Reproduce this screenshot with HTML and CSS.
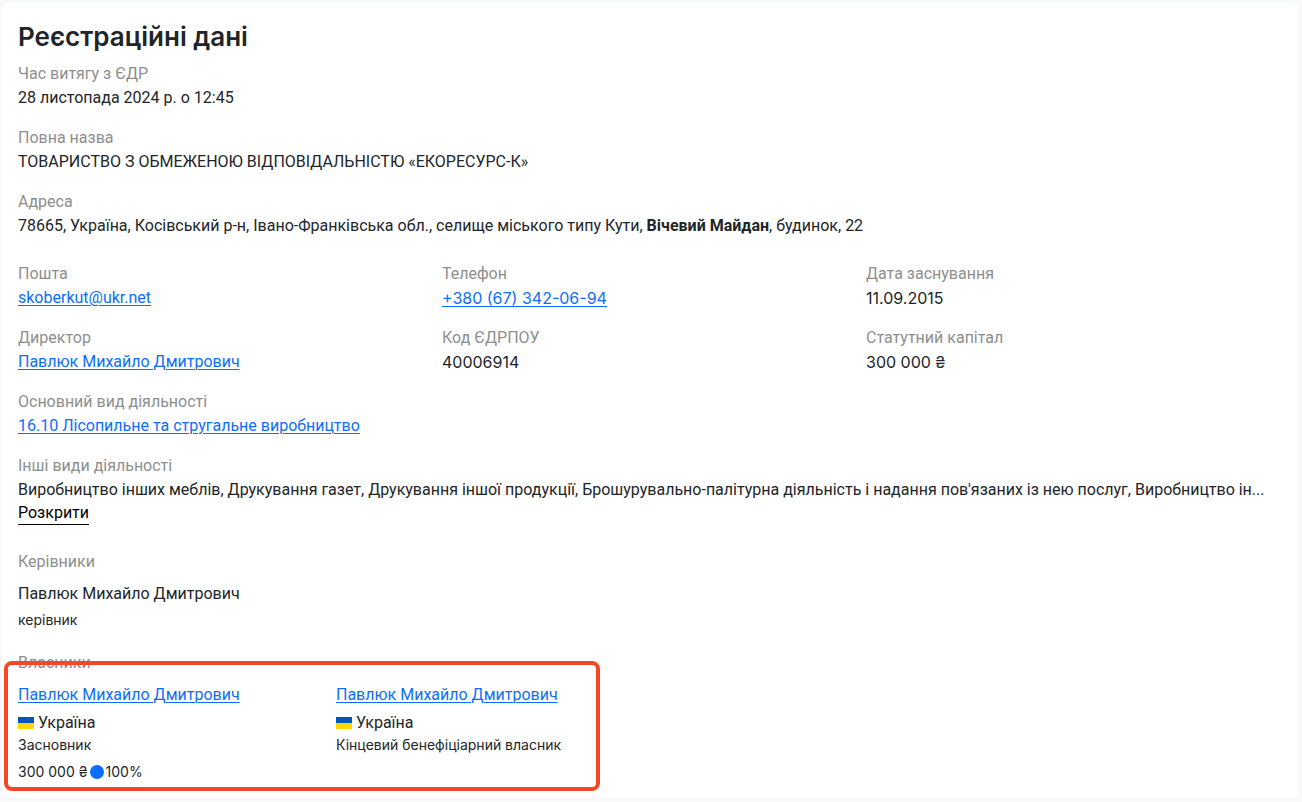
FILE: index.html
```html
<!DOCTYPE html>
<html lang="uk">
<head>
<meta charset="utf-8">
<meta name="viewport" content="width=device-width, initial-scale=1">
<title>Реєстраційні дані</title>
<link rel="stylesheet" href="styles.css">
</head>
<body>
<main class="card">
  <h1 class="title">Реєстраційні дані</h1>
  <dl class="fields">
    <div class="field"><dt>Час витягу з ЄДР</dt><dd>28 листопада 2024 р. о 12:45</dd></div>
    <div class="field"><dt>Повна назва</dt><dd>ТОВАРИСТВО З ОБМЕЖЕНОЮ ВІДПОВІДАЛЬНІСТЮ «ЕКОРЕСУРС-К»</dd></div>
    <div class="field"><dt>Адреса</dt><dd>78665, Україна, Косівський р-н, Івано-Франківська обл., селище міського типу Кути, <b>Вічевий Майдан</b>, будинок, 22</dd></div>
  </dl>
  <dl class="fields grid">
    <div class="field"><dt>Пошта</dt><dd><a href="mailto:skoberkut@ukr.net">skoberkut@ukr.net</a></dd></div>
    <div class="field"><dt>Телефон</dt><dd class="numeric"><a href="tel:+380673420694">+380 (67) 342-06-94</a></dd></div>
    <div class="field"><dt>Дата заснування</dt><dd class="numeric">11.09.2015</dd></div>
    <div class="field"><dt>Директор</dt><dd><a href="#director">Павлюк Михайло Дмитрович</a></dd></div>
    <div class="field"><dt>Код ЄДРПОУ</dt><dd class="numeric">40006914</dd></div>
    <div class="field"><dt>Статутний капітал</dt><dd class="numeric">300 000 ₴</dd></div>
  </dl>
  <dl class="fields activities">
    <div class="field"><dt>Основний вид діяльності</dt><dd><a href="#kved">16.10 Лісопильне та стругальне виробництво</a></dd></div>
    <div class="field"><dt>Інші види діяльності</dt><dd class="clip">Виробництво інших меблів, Друкування газет, Друкування іншої продукції, Брошурувально-палітурна діяльність і надання пов'язаних із нею послуг, Виробництво ін...</dd></div>
  </dl>
  <button class="expand" type="button">Розкрити</button>
  <section class="people">
    <h2 class="label">Керівники</h2>
    <p class="name">Павлюк Михайло Дмитрович</p>
    <p class="small">керівник</p>
  </section>
  <section class="people owners">
    <h2 class="label">Власники</h2>
    <div class="owner-list">
      <article class="owner">
        <a class="name" href="#founder">Павлюк Михайло Дмитрович</a>
        <p class="country"><span class="flag"></span>Україна</p>
        <p class="small role">Засновник</p>
        <p class="small share">300 000 ₴<span class="dot"></span>100%</p>
      </article>
      <article class="owner">
        <a class="name" href="#beneficiary">Павлюк Михайло Дмитрович</a>
        <p class="country"><span class="flag"></span>Україна</p>
        <p class="small role">Кінцевий бенефіціарний власник</p>
      </article>
    </div>
    <div class="highlight"></div>
  </section>
</main>
</body>
</html>
```
FILE: styles.css
```css
* { box-sizing: border-box; }
body {
  margin: 0;
  padding: 3px 4px 3px 2px;
  background: #f8f9fa;
  color: #212529;
  font: 16px/24px Roboto, "Liberation Sans", sans-serif;
}
h1, h2, p, dl, dd { margin: 0; }
a { color: #0d6efd; text-underline-offset: 2px; text-decoration-thickness: 1px; }
.card {
  padding: 18px 8px 16px 16px;
  border-radius: 6px;
  background: #fff;
}
.title {
  margin-bottom: 9px;
  font-family: Inter, "Liberation Sans", sans-serif;
  font-size: 26px;
  font-weight: 600;
  line-height: 32px;
}
.fields { display: grid; gap: 16px; }
.grid {
  grid-template-columns: repeat(3, minmax(0, 1fr));
  column-gap: 0;
  margin: 24px 0 16px;
}
.field { min-width: 0; }
.numeric { font-family: Inter, "Liberation Sans", sans-serif; }
dt, .label {
  color: #8e8e8e;
  font-size: 16px;
  font-weight: 400;
}
.clip {
  overflow: hidden;
  text-overflow: ellipsis;
  white-space: nowrap;
}
.expand {
  display: block;
  padding: 0;
  border: 0;
  border-bottom: 1px solid #000;
  background: none;
  color: #000;
  font: inherit;
  line-height: 22px;
}
.people { margin-top: 25px; }
.people .name { display: block; margin-top: 8px; }
.small { font-family: Inter, "Liberation Sans", sans-serif; font-size: 14px; line-height: 21px; }
.people > .small { margin-top: 3px; }
.owners { position: relative; margin-top: 21px; }
.owner-list { display: flex; }
.owner { flex: 0 0 25%; white-space: nowrap; }
.country { display: flex; align-items: center; gap: 4px; margin-top: 4px; line-height: 23px; }
.flag {
  width: 16px;
  height: 12px;
  background: linear-gradient(#0057b8 50%, #ffd700 50%);
}
.share { display: flex; align-items: center; gap: 2px; margin-top: 6px; }
.dot { width: 14px; height: 14px; border-radius: 50%; background: #0d6efd; }
.highlight {
  position: absolute;
  top: 10px;
  left: -14px;
  width: 596px;
  height: 130px;
  border: 4px solid #f34725;
  border-radius: 8px;
  pointer-events: none;
}
```
